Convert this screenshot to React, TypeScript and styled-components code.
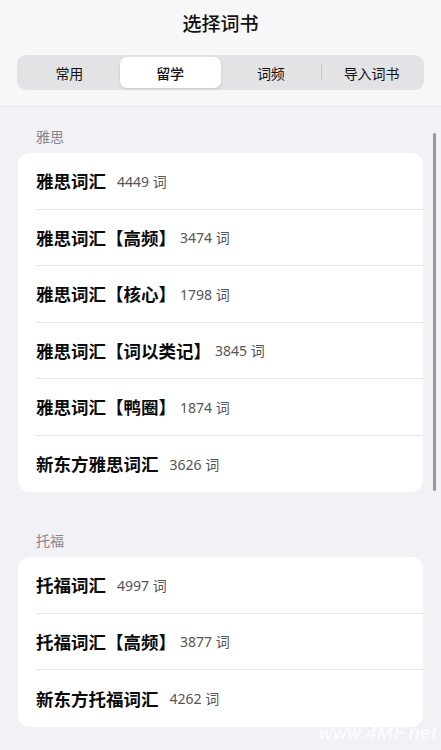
import styled, { createGlobalStyle } from "styled-components";

const GlobalStyle = createGlobalStyle`
  body {
    margin: 0;
    background: #f2f1f6;
    font-family: "Noto Sans CJK SC", "Noto Sans", sans-serif;
    -webkit-font-smoothing: antialiased;
  }
`;

const Page = styled.div`
  position: relative;
  width: 441px;
  height: 750px;
  overflow: hidden;
  background: #f2f1f6;
`;

const Header = styled.header`
  background: #f7f7f7;
  border-bottom: 1px solid #e6e6e8;
  padding: 6px 17px 16px;
  box-sizing: border-box;
  height: 107px;
`;

const Title = styled.h1`
  margin: 0;
  text-align: center;
  font-size: 19px;
  font-weight: 500;
  line-height: 34px;
  color: #111;
`;

const Segmented = styled.div`
  margin-top: 15px;
  display: grid;
  grid-template-columns: repeat(4, 1fr);
  background: #e3e3e5;
  border-radius: 9px;
  padding: 2px;
  height: 35px;
  box-sizing: border-box;
`;

const Segment = styled.div<{ $active?: boolean; $divider?: boolean }>`
  position: relative;
  display: flex;
  align-items: center;
  justify-content: center;
  font-size: 14px;
  color: #111;
  font-weight: ${(p) => (p.$active ? 500 : 400)};
  background: ${(p) => (p.$active ? "#fff" : "transparent")};
  border-radius: 7px;
  box-shadow: ${(p) => (p.$active ? "0 1px 3px rgba(0,0,0,0.12)" : "none")};

  &::before {
    content: "";
    display: ${(p) => (p.$divider ? "block" : "none")};
    position: absolute;
    left: 0;
    top: 7px;
    bottom: 7px;
    width: 1px;
    background: #c8c8cc;
  }
`;

const Content = styled.main`
  padding: 0 18px;
`;

const SectionLabel = styled.div<{ $first?: boolean }>`
  padding: ${(p) => (p.$first ? "19px" : "38px")} 18px 7px;
  font-size: 14px;
  line-height: 20px;
  color: #86868b;
`;

const Card = styled.div`
  background: #fff;
  border-radius: 12px;
  overflow: hidden;
`;

const Row = styled.div`
  padding-left: 18px;
  height: 56.5px;
`;

const RowInner = styled.div<{ $last?: boolean }>`
  height: 100%;
  box-sizing: border-box;
  display: flex;
  align-items: center;
  gap: 11px;
  border-bottom: ${(p) => (p.$last ? "none" : "1px solid #e6e6ea")};
`;

const BookName = styled.span`
  font-size: 17.5px;
  font-weight: 700;
  color: #0c0c0c;
`;

// the full-width closing bracket carries empty space on its right; pull the count in
const CloseBracket = styled.span`
  display: inline-block;
  margin-right: -7px;
`;

const Count = styled.span`
  font-size: 14px;
  color: #555;
  font-family: "Noto Sans", "Noto Sans CJK SC", sans-serif;
`;

const ScrollBar = styled.div`
  position: absolute;
  right: 5px;
  top: 133px;
  width: 3px;
  height: 358px;
  border-radius: 2px;
  background: #98989c;
`;

const Watermark = styled.div`
  position: absolute;
  right: 4px;
  bottom: 6px;
  font-family: "Liberation Sans", sans-serif;
  font-size: 19px;
  font-style: italic;
  color: rgba(255, 255, 255, 0.9);
  letter-spacing: 0.5px;
`;

type Book = { name: string; count: number };

const sections: { title: string; books: Book[] }[] = [
  {
    title: "雅思",
    books: [
      { name: "雅思词汇", count: 4449 },
      { name: "雅思词汇【高频】", count: 3474 },
      { name: "雅思词汇【核心】", count: 1798 },
      { name: "雅思词汇【词以类记】", count: 3845 },
      { name: "雅思词汇【鸭圈】", count: 1874 },
      { name: "新东方雅思词汇", count: 3626 },
    ],
  },
  {
    title: "托福",
    books: [
      { name: "托福词汇", count: 4997 },
      { name: "托福词汇【高频】", count: 3877 },
      { name: "新东方托福词汇", count: 4262 },
    ],
  },
];

const tabs = ["常用", "留学", "词频", "导入词书"];

const renderName = (name: string) =>
  name.split(/(】)/).map((part, i) =>
    part === "】" ? <CloseBracket key={i}>{part}</CloseBracket> : part
  );

const App = () => {
  return (
    <Page>
      <GlobalStyle />
      <Header>
        <Title>选择词书</Title>
        <Segmented>
          {tabs.map((t, i) => (
            <Segment key={t} $active={i === 1} $divider={i === 3}>
              {t}
            </Segment>
          ))}
        </Segmented>
      </Header>
      <Content>
        {sections.map((s, si) => (
          <div key={s.title}>
            <SectionLabel $first={si === 0}>{s.title}</SectionLabel>
            <Card>
              {s.books.map((b, bi) => (
                <Row key={b.name}>
                  <RowInner $last={bi === s.books.length - 1}>
                    <BookName>{renderName(b.name)}</BookName>
                    <Count>{b.count} 词</Count>
                  </RowInner>
                </Row>
              ))}
            </Card>
          </div>
        ))}
      </Content>
      <ScrollBar />
      <Watermark>www.4MF.net</Watermark>
    </Page>
  );
};

export default App;
